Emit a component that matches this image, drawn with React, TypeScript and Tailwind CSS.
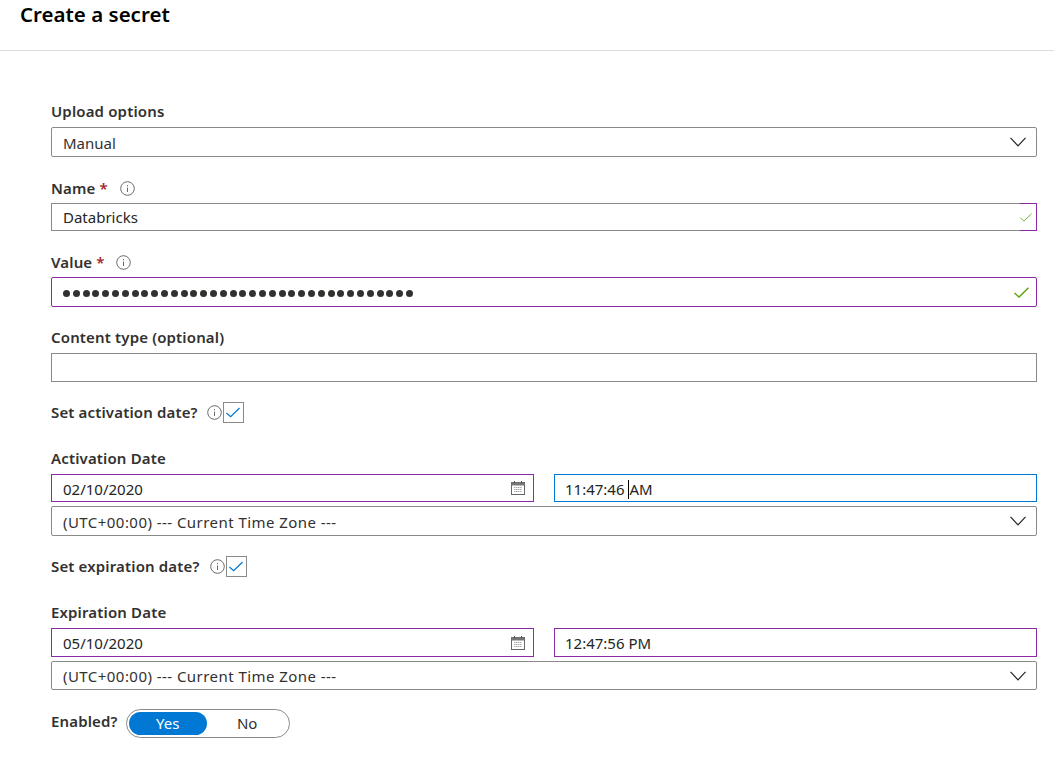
import type { ReactNode } from "react";

function Info({ className = "" }: { className?: string }) {
  return (
    <svg width="15" height="15" viewBox="0 0 15 15" fill="none" className={className}>
      <circle cx="7.5" cy="7.5" r="6.8" stroke="#6b6b6b" strokeWidth="1" />
      <rect x="7" y="6.5" width="1" height="4.5" fill="#6b6b6b" />
      <rect x="7" y="4" width="1" height="1.2" fill="#6b6b6b" />
    </svg>
  );
}

function Tick({ width, height, color, stroke = 1.2 }: { width: number; height: number; color: string; stroke?: number }) {
  return (
    <svg width={width} height={height} viewBox="0 0 15 11" fill="none">
      <path d="M0.5 6l4.5 4L14.5 0.7" stroke={color} strokeWidth={stroke} />
    </svg>
  );
}

function Label({ children, className = "" }: { children: ReactNode; className?: string }) {
  return <div className={`h-5 text-[15px] leading-[18px] font-semibold tracking-[0.15px] text-[#323130] ${className}`}>{children}</div>;
}

function Star() {
  return <span className="ml-1 text-[#a4262c]">*</span>;
}

function Select({ value, className = "" }: { value: string; className?: string }) {
  return (
    <div className={`flex items-center justify-between rounded-[2px] border border-[#8a8a8a] pl-[11px] pr-[10px] text-[#323130] ${className}`}>
      <span className="pt-[2px]">{value}</span>
      <svg width="16" height="10" viewBox="0 0 16 10" fill="none">
        <path d="M0.5 0.8L8 8.8L15.5 0.8" stroke="#252525" strokeWidth="1.2" />
      </svg>
    </div>
  );
}

function Calendar() {
  return (
    <svg width="16" height="16" viewBox="0 0 16 16" fill="none">
      <rect x="1.5" y="2.5" width="13" height="12" stroke="#666" />
      <rect x="1.5" y="2.5" width="13" height="3" fill="#777" />
      <rect x="4" y="1" width="1" height="2.5" fill="#555" />
      <rect x="11" y="1" width="1" height="2.5" fill="#555" />
      <path d="M4 7.5h8M4 9.5h8M4 11.5h8M5 7v5.5M7 7v5.5M9 7v5.5M11 7v5.5" stroke="#aaa" strokeDasharray="1 1" />
    </svg>
  );
}

function DateRow({ date, time, focused, height }: { date: string; time: ReactNode; focused?: boolean; height: string }) {
  return (
    <div className={`flex gap-5 ${height}`}>
      <div className="flex w-[483px] items-center justify-between border border-[#8c2ba8] pl-[11px] pr-[7px] text-[#252525]">
        <span className="pt-[2px]">{date}</span>
        <Calendar />
      </div>
      <div className={`flex flex-1 items-center pl-[10px] pt-[2px] text-[#252525] border ${focused ? "border-[#0078d4]" : "border-[#8c2ba8]"}`}>
        {time}
      </div>
    </div>
  );
}

function Checkbox() {
  return (
    <div className="flex h-[21px] w-[21px] items-center justify-center border border-[#8a8a8a]">
      <Tick width={14} height={11} color="#0078d4" stroke={1.3} />
    </div>
  );
}

export default function App() {
  return (
    <div className="h-[767px] overflow-hidden bg-white text-[15px] font-['Noto_Sans',sans-serif]">
      <header className="h-[51px] border-b border-[#dcdcdc] pl-5">
        <h1 className="text-[20.5px] leading-7 font-semibold text-black">Create a secret</h1>
      </header>

      <main className="ml-[51px] w-[986px] pt-[51px]">
        <Label>Upload options</Label>
        <Select value="Manual" className="mt-[5px] h-[30px]" />

        <Label className="mt-[21px] flex items-center">
          Name<Star />
          <Info className="ml-[12px]" />
        </Label>
        <div className="relative mt-[5px] flex h-[28px] items-center justify-between border border-[#8a8a8a] pl-[11px] pr-[4px] text-[#252525]">
          <span>Databricks</span>
          <Tick width={12} height={9} color="#6bb32e" />
          <div className="absolute -top-px -right-px -bottom-px w-[17px] border-y border-r border-[#8c2ba8]" />
        </div>

        <Label className="mt-[21px] flex items-center">
          Value<Star />
          <Info className="ml-[11px]" />
        </Label>
        <div className="mt-[5px] flex h-[30px] items-center justify-between rounded-[2px] border border-[#8c2ba8] pl-[11px] pr-[7px]">
          <div className="flex gap-[2.8px] pt-[2px]">
            {Array.from({ length: 36 }, (_, i) => (
              <span key={i} className="h-[7px] w-[7px] rounded-full bg-[#323130]" />
            ))}
          </div>
          <Tick width={15} height={11} color="#57a300" stroke={1.4} />
        </div>

        <Label className="mt-[21px]">Content type (optional)</Label>
        <div className="mt-[5px] h-[29px] border border-[#8a8a8a]" />

        <div className="mt-[20px] flex h-[21px] items-center">
          <Label>Set activation date?</Label>
          <Info className="ml-[9px] mr-[1px]" />
          <Checkbox />
        </div>

        <Label className="mt-[26px]">Activation Date</Label>
        <div className="mt-[5px]">
          <DateRow
            date="02/10/2020"
            focused
            height="h-[28px]"
            time={
              <>
                <span>11:47:46&nbsp;</span>
                <span className="h-[19px] w-px bg-black" />
                <span>AM</span>
              </>
            }
          />
        </div>
        <Select value="(UTC+00:00) --- Current Time Zone ---" className="mt-[4px] h-[30px] tracking-[0.45px]" />

        <div className="mt-[20px] flex h-[21px] items-center">
          <Label>Set expiration date?</Label>
          <Info className="ml-[10px] mr-[1px]" />
          <Checkbox />
        </div>

        <Label className="mt-[26px]">Expiration Date</Label>
        <div className="mt-[5px]">
          <DateRow date="05/10/2020" height="h-[29px]" time="12:47:56 PM" />
        </div>
        <Select value="(UTC+00:00) --- Current Time Zone ---" className="mt-[4px] h-[29px] tracking-[0.45px]" />

        <div className="mt-[19px] flex items-center">
          <Label className="-mt-[3px]">Enabled?</Label>
          <div className="ml-[8px] flex h-[29px] w-[164px] items-center rounded-full border border-[#8a8a8a] pl-[2px] pr-[1px]">
            <div className="flex h-[23px] w-[78px] items-center justify-center rounded-full bg-[#0078d4] text-white">Yes</div>
            <div className="flex-1 text-center text-[#323130]">No</div>
          </div>
        </div>
      </main>
    </div>
  );
}
